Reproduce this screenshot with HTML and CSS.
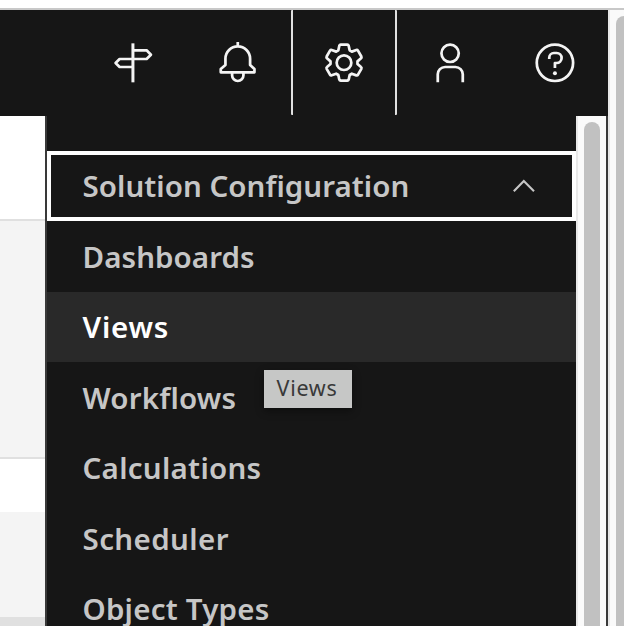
FILE: index.html
```html
<!DOCTYPE html>
<html lang="en">
<head>
<meta charset="utf-8">
<title>Solution Configuration</title>
<link rel="stylesheet" href="styles.css">
</head>
<body>
<div class="window">
  <div class="app">
    <header class="header">
      <button class="action" aria-label="Tour"><svg class="icon" viewBox="32.2 123 132 132"><path class="post" d="M98 130V247"/><path d="M98 151H139L152 164L139 177H58L46 189L58 201H98"/></svg></button>
      <button class="action" aria-label="Notifications"><svg class="icon" viewBox="348.7 123 132 132"><path d="M414 126V138M377 176a37 37 0 0 1 74 0V195L464 207V217H363V207L377 195ZM397 218V226a17 17 0 0 0 34 0V218"/></svg></button>
      <button class="action active" aria-label="Settings"><svg class="icon" viewBox="-66 -65 132 132"><circle r="22"/><path d="M-10 -54H10Q13 -54 14 -51L17 -37L23.5 -33.2L37 -38Q40 -39 42 -36L52 -18.5Q53.5 -15 51 -13L40.5 -3.8V3.8L51 13Q53.5 15 52 18.5L42 36Q40 39 37 38L23.5 33.2L17 37L14 51Q13 54 10 54H-10Q-13 54 -14 51L-17 37L-23.5 33.2L-37 38Q-40 39 -42 36L-52 18.5Q-53.5 15 -51 13L-40.5 3.8V-3.8L-51 -13Q-53.5 -15 -52 -18.5L-42 -36Q-40 -39 -37 -38L-23.5 -33.2L-17 -37L-14 -51Q-13 -54 -10 -54Z"/></svg></button>
      <button class="action" aria-label="User"><svg class="icon" viewBox="443.7 123 132 132"><circle cx="510" cy="160" r="26"/><path d="M473 247V223a22 22 0 0 1 22-22H526a22 22 0 0 1 22 22V247"/></svg></button>
      <button class="action" aria-label="Help"><svg class="icon" viewBox="207.2 123 132 132"><circle cx="273" cy="188.5" r="54.5"/><path d="M256 177V173a14 14 0 0 1 14-14H278a15 15 0 0 1 0 30H273V204"/><circle class="dot" cx="273" cy="220" r="6"/></svg></button>
    </header>
    <div class="body">
      <main class="content">
        <div class="band first"></div>
        <div class="band second"></div>
        <div class="band third"></div>
        <div class="band fourth"></div>
      </main>
      <nav class="panel">
        <button class="group"><span class="t-solution">Solution Configuration</span><svg class="chevron" viewBox="0 0 24 14"><path d="M1.8 12.3L11.8 2L22 12.3"/></svg></button>
        <ul class="menu">
          <li class="t-dashboards">Dashboards</li>
          <li class="t-views selected">Views<span class="tooltip">Views</span></li>
          <li class="t-workflows">Workflows</li>
          <li class="t-calculations">Calculations</li>
          <li class="t-scheduler">Scheduler</li>
          <li class="t-types">Object Types</li>
        </ul>
      </nav>
      <div class="scroll inner"><div class="thumb"></div></div>
    </div>
  </div>
  <div class="scroll outer"><div class="thumb"></div></div>
</div>
</body>
</html>
```
FILE: styles.css
```css
* { box-sizing: border-box; }
body { margin: 0; overflow: hidden; background: #fff; font-family: "Noto Sans", sans-serif; }
button { margin: 0; padding: 0; border: 0; background: none; color: inherit; font: inherit; }
.window { display: flex; height: 618px; margin-top: 8px; border-top: 2px solid #c8c8c8; overflow: hidden; }
.app { width: 608px; flex: none; display: flex; flex-direction: column; }
.header { height: 106px; flex: none; display: flex; justify-content: flex-end; background: #161616; }
.action { width: 105.5px; display: flex; align-items: center; justify-content: center; }
.action.active { width: 106px; height: 105px; border: solid #e0e0e0; border-width: 0 2px; border-radius: 1px; }
.icon { width: 44px; height: 44px; fill: none; stroke: #f4f4f4; stroke-width: 8.2; stroke-linejoin: round; }
.icon .post { stroke-width: 9; }
.icon .dot { fill: #f4f4f4; stroke: none; }
.body { display: flex; flex: 1; min-height: 0; }
.content { width: 45px; flex: none; }
.band.first { height: 105px; border-bottom: 2px solid #e0e0e0; background: #fff; }
.band.second { height: 238px; border-bottom: 2px solid #e0e0e0; background: #f4f4f4; }
.band.third { height: 53px; background: #fff; }
.band.fourth { height: 114px; border-bottom: 9px solid #e0e0e0; background: #f4f4f4; }
.panel { width: 531px; flex: none; padding-top: 35px; border-left: 2px solid #393939; background: #161616; color: #c6c6c6; font-size: 29.5px; font-weight: 600; line-height: 40px; white-space: nowrap; }
.group { width: 100%; height: 70px; padding: 0 36px 0 31.5px; border: 4px solid #fff; display: flex; align-items: center; justify-content: space-between; }
.chevron { width: 24px; height: 14px; fill: none; stroke: #c6c6c6; stroke-width: 2.1; }
.menu { margin: 0; padding: 0.4px 0 0; list-style: none; }
.menu li { position: relative; height: 70.4px; padding: 1px 0 0 35.5px; display: flex; align-items: center; }
.menu .selected { background: #292929; color: #fff; }
.t-solution { letter-spacing: 0.04px; }
.t-dashboards { letter-spacing: 0.08px; }
.t-views { letter-spacing: 0.8px; }
.t-workflows { letter-spacing: 0.22px; }
.t-calculations { letter-spacing: 0.28px; }
.t-scheduler { letter-spacing: 0.4px; }
.t-types { letter-spacing: 0.22px; }
.tooltip { position: absolute; z-index: 1; left: 217px; top: 78px; width: 88px; height: 38px; padding-right: 2px; background: #c6c7c6; box-shadow: 0 3px 8px #0006; color: #393939; font-size: 21.5px; font-weight: 400; line-height: 36px; letter-spacing: 0.7px; text-align: center; }
.scroll { background: #fafafa; border-left: 2px solid #e8e8e8; }
.thumb { height: 100%; background: #c1c1c1; }
.inner { width: 32px; flex: none; padding: 6px 6px 0; border-right: 2px solid #393939; }
.inner .thumb { border-radius: 8px 8px 0 0; }
.outer { width: 16px; padding: 6px 0 0 6px; }
.outer .thumb { border-radius: 8px 0 0 0; }
```
